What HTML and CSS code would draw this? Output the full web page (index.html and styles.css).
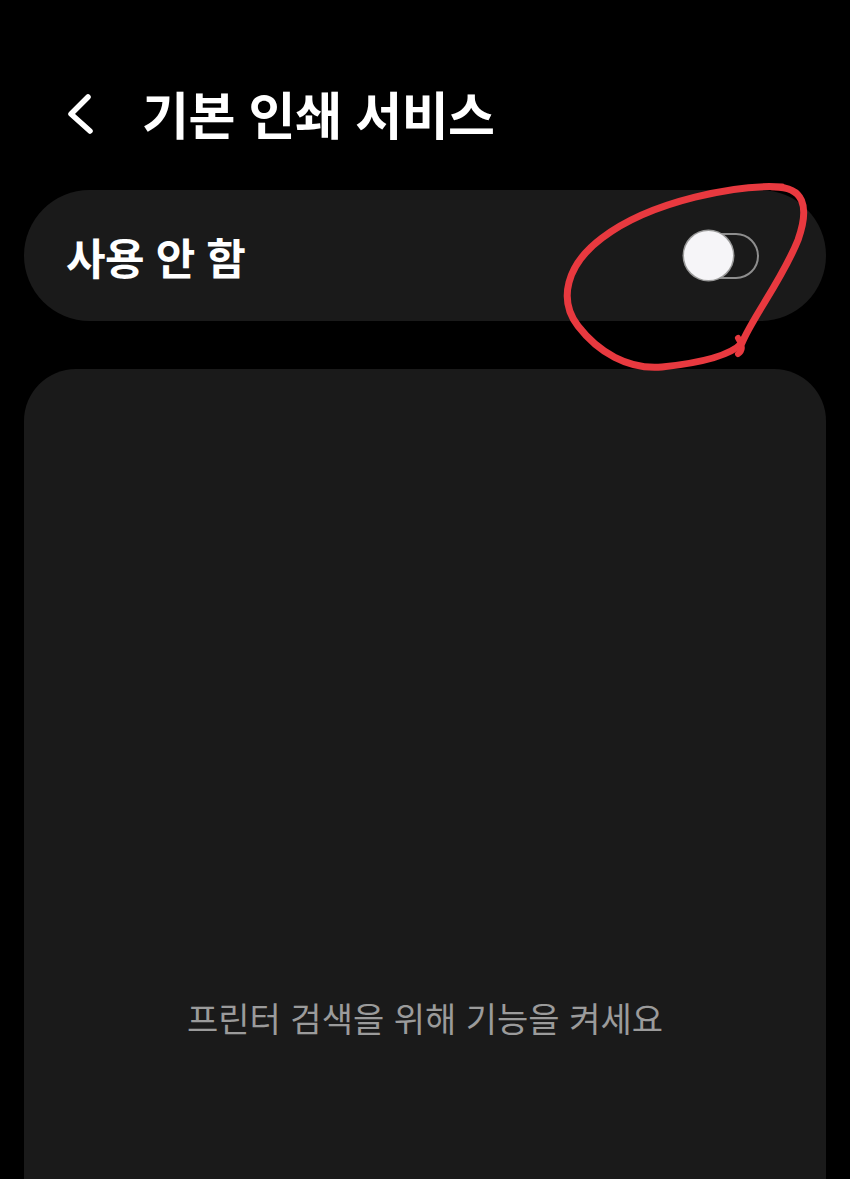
FILE: index.html
```html
<!DOCTYPE html>
<html lang="ko">
<head>
    <meta charset="UTF-8">
    <meta name="viewport" content="width=device-width, initial-scale=1.0">
    <title>기본 인쇄 서비스</title>
    <link rel="stylesheet" href="styles.css">
</head>
<body>
    <div class="page">
        <div class="header">
            <button class="back" aria-label="뒤로">
                <svg width="40" height="50" viewBox="0 0 40 50">
                    <path d="M22 13 L5 30 L24 47" fill="none" stroke="#ffffff" stroke-width="5.5" stroke-linecap="round" stroke-linejoin="round"/>
                </svg>
            </button>
            <h1>기본 인쇄 서비스</h1>
        </div>

        <div class="switch-card">
            <span class="switch-label">사용 안 함</span>
            <div class="toggle">
                <div class="knob"></div>
            </div>
        </div>

        <div class="list-card">
            <p class="empty">프린터 검색을 위해 기능을 켜세요</p>
        </div>
    </div>

    <!-- hand drawn mark over the switch -->
    <svg class="scribble" width="850" height="1179" viewBox="0 0 850 1179">
        <path d="M782 187 C 740 184, 652 200, 602 238 C 566 265, 558 300, 578 326 C 598 352, 628 370, 662 367 C 700 363, 730 356, 742 343 C 752 318, 782 280, 798 240 C 810 206, 804 186, 772 187"
              fill="none" stroke="#e8393f" stroke-width="7" stroke-linecap="round" stroke-linejoin="round"/>
        <path d="M738 338 C 742 344, 744 350, 738 354" fill="none" stroke="#e8393f" stroke-width="6" stroke-linecap="round"/>
    </svg>
</body>
</html>
```

FILE: styles.css
```css
body {
    margin: 0;
    background: #000000;
    font-family: "Noto Sans CJK KR", "Noto Sans", sans-serif;
    color: #ffffff;
    height: 1179px;
    overflow: hidden;
    position: relative;
}

.page {
    padding: 0 24px;
}

.header {
    padding-top: 40px;
    display: flex;
    align-items: center;
    box-sizing: border-box;
    height: 190px;
}

.back {
    background: none;
    border: none;
    padding: 0;
    margin-left: 42px;
    width: 76px;
    height: 50px;
    display: flex;
    align-items: center;
    cursor: pointer;
    margin-top: -12px;
}

h1 {
    margin: 0;
    margin-top: -4px;
    font-size: 51px;
    font-weight: 700;
    letter-spacing: -0.5px;
    color: #ffffff;
}

.switch-card {
    background: #1a1a1a;
    height: 131px;
    border-radius: 66px;
    display: flex;
    align-items: center;
    justify-content: space-between;
    padding: 0 67px 0 42px;
}

.switch-label {
    font-size: 43px;
    font-weight: 700;
    letter-spacing: -0.5px;
}

.toggle {
    width: 74px;
    height: 46px;
    box-sizing: border-box;
    border: 2px solid #8e8e8e;
    border-radius: 23px;
    display: flex;
    align-items: center;
}

.knob {
    width: 49px;
    height: 49px;
    margin-left: -3px;
    border-radius: 50%;
    background: #f6f5f8;
    box-shadow: 0 0 0 1.5px #9a9a9a;
}

.list-card {
    margin-top: 48px;
    background: #1a1a1a;
    height: 810px;
    border-radius: 52px 52px 0 0;
    padding-top: 624px;
    box-sizing: border-box;
}

.empty {
    margin: 0;
    text-align: center;
    font-size: 34px;
    color: #9b9b9b;
}

.scribble {
    position: absolute;
    top: 0;
    left: 0;
    pointer-events: none;
}
```
